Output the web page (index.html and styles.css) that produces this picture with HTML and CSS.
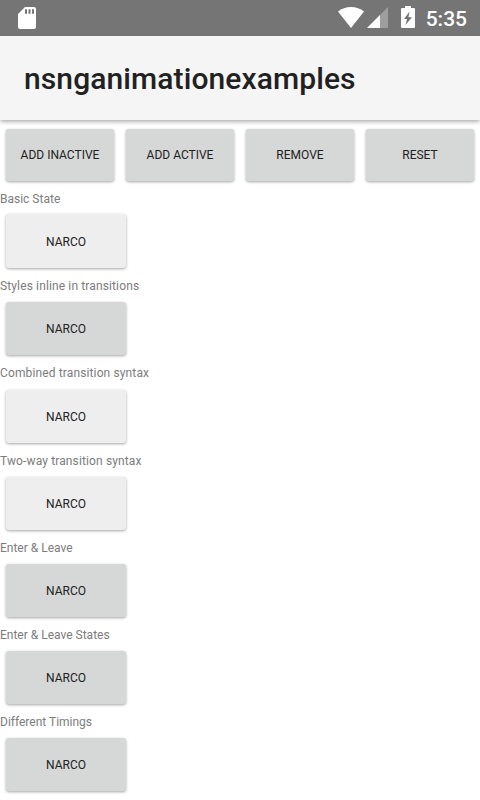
FILE: index.html
```html
<!DOCTYPE html>
<html lang="en">
<head>
<meta charset="utf-8">
<meta name="viewport" content="width=device-width">
<title>nsnganimationexamples</title>
<link rel="stylesheet" href="styles.css">
</head>
<body>
<div class="status">
  <svg class="sd" width="18" height="22" viewBox="0 0 18 22"><path fill="#fff" fill-rule="evenodd" d="M7 0H16Q18 0 18 2V20Q18 22 16 22H2Q0 22 0 20V7ZM7 2.3V6.7H9V2.3ZM10.5 2.3V6.7H12.5V2.3ZM14 2.3V6.7H16V2.3Z"/></svg>
  <svg class="wifi" width="26" height="21" viewBox="0 0 26 21"><path fill="#fff" d="M0 4.5Q5.5 0 13 0T26 4.5L13 21Z"/></svg>
  <svg class="signal" width="21" height="21" viewBox="0 0 21 21"><path fill="#fff" fill-opacity=".3" d="M21 0V21H0Z"/><path fill="#fff" d="M13 8V21H0Z"/></svg>
  <svg class="battery" width="14" height="22" viewBox="0 0 14 22"><path fill="#fff" fill-rule="evenodd" d="M4 0H10V2H13Q14 2 14 3V21Q14 22 13 22H1Q0 22 0 21V3Q0 2 1 2H4ZM8.5 5.5L3 13H6L4.5 19L11 11.2H7.5Z"/></svg>
  <span class="clock">5:35</span>
</div>
<header class="bar"><h1>nsnganimationexamples</h1></header>
<main>
  <div class="actions">
    <button>ADD INACTIVE</button>
    <button>ADD ACTIVE</button>
    <button>REMOVE</button>
    <button>RESET</button>
  </div>
  <section><h2>Basic State</h2><button class="inactive">NARCO</button></section>
  <section><h2 class="wide">Styles inline in transitions</h2><button>NARCO</button></section>
  <section class="combined"><h2 class="wide">Combined transition syntax</h2><button class="inactive">NARCO</button></section>
  <section><h2 class="wide">Two-way transition syntax</h2><button class="inactive">NARCO</button></section>
  <section><h2>Enter &amp; Leave</h2><button>NARCO</button></section>
  <section><h2>Enter &amp; Leave States</h2><button>NARCO</button></section>
  <section><h2>Different Timings</h2><button>NARCO</button></section>
</main>
</body>
</html>
```
FILE: styles.css
```css
* { box-sizing: border-box; }
body {
  margin: 0;
  height: 800px;
  overflow: hidden;
  background: #fff;
  font-family: Roboto, "Liberation Sans", sans-serif;
}
.status {
  position: relative;
  z-index: 1;
  height: 36px;
  padding: 7px 13px 0 18px;
  display: flex;
  align-items: flex-start;
  background: #757575;
}
.status svg { display: block; flex: none; }
.wifi { margin-left: auto; }
.signal { margin-left: 3px; }
.battery { margin: -1px 11px 0 13px; }
.clock {
  color: #fff;
  font-size: 21px;
  font-weight: 500;
  line-height: 24px;
}
.bar {
  position: relative;
  height: 84px;
  padding: 2px 0 0 24px;
  display: flex;
  align-items: center;
  background: #f5f5f5;
  box-shadow: 0 1px 5px rgba(0, 0, 0, .42);
}
h1 {
  margin: 0;
  color: #212121;
  font-size: 30px;
  font-weight: 500;
  line-height: 40px;
  letter-spacing: .1px;
}
.actions {
  display: grid;
  grid-template-columns: repeat(4, 108px);
  gap: 12px;
  padding: 9px 6px 9px;
}
button {
  display: block;
  height: 53px;
  padding: 0;
  border: 0;
  border-radius: 3px;
  background: #d6d8d7;
  box-shadow: 0 1px 3px rgba(0, 0, 0, .36);
  color: #212121;
  font: 400 12px/53px Roboto, "Liberation Sans", sans-serif;
}
.actions button {
  height: 52px;
  line-height: 52px;
}
section { height: 87px; }
h2 {
  margin: 0;
  color: #7c7c7c;
  font-size: 12px;
  font-weight: 400;
  line-height: 18px;
}
.wide { letter-spacing: .13px; }
section button {
  width: 120px;
  margin: 7px 0 0 6px;
  padding-top: 1px;
}
section:first-of-type button {
  height: 54px;
  margin-top: 6px;
  padding-top: 2px;
}
.inactive { background: #eee; }
.combined { height: 88px; }
.combined button { margin-top: 8px; }
```
